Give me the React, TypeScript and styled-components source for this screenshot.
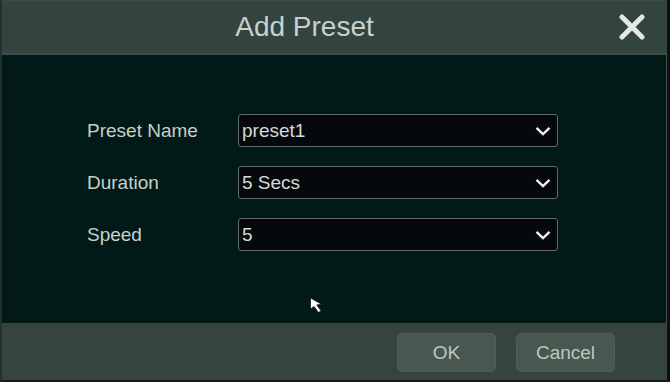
import React from 'react'
import styled, { createGlobalStyle } from 'styled-components'

const GlobalStyle = createGlobalStyle`
  html, body {
    margin: 0;
    padding: 0;
    background: #0b100f;
  }
  body {
    font-family: 'Liberation Sans', Arial, sans-serif;
  }
`

const Dialog = styled.div`
  width: 670px;
  height: 382px;
  box-sizing: border-box;
  display: flex;
  flex-direction: column;
  border-left: 2px solid #26312e;
  border-right: 3px solid #0c1110;
  border-bottom: 2px solid #151b1a;
  background: #021a17;
`

const Header = styled.div`
  height: 55px;
  box-sizing: border-box;
  display: flex;
  align-items: center;
  background: #33443f;
  border-top: 1px solid #3b4b46;
  border-bottom: 2px solid #3f504b;
`

const Title = styled.div`
  flex: 1;
  text-align: center;
  font-size: 28px;
  color: #c9d0cd;
  padding-left: 10px;
`

const CloseButton = styled.button`
  width: 70px;
  height: 100%;
  background: none;
  border: none;
  padding: 0;
  display: flex;
  align-items: center;
  justify-content: center;
  cursor: pointer;
`

const Body = styled.div`
  position: relative;
  flex: 1;
  display: flex;
  flex-direction: column;
  gap: 19px;
  padding: 59px 0 0 85px;
  border-right: 1px solid #4a5552;
`

const Row = styled.div`
  display: flex;
  align-items: center;
`

const Label = styled.div`
  width: 151px;
  font-size: 19px;
  color: #c8cfcb;
`

const Select = styled.div`
  width: 320px;
  height: 33px;
  box-sizing: border-box;
  display: flex;
  align-items: center;
  justify-content: space-between;
  padding: 0 6px 0 3px;
  background: #05090c;
  border: 1px solid #616a68;
  border-radius: 3px;
  font-size: 19px;
  color: #d6dad8;
`

const Cursor = styled.svg`
  position: absolute;
  left: 307px;
  top: 242px;
`

const Footer = styled.div`
  height: 57px;
  box-sizing: border-box;
  display: flex;
  justify-content: flex-end;
  align-items: flex-start;
  gap: 20px;
  padding: 10px 52px 0 0;
  background: #35443f;
`

const Button = styled.button`
  width: 99px;
  height: 39px;
  background: #48574f;
  border: 1px solid #4e5d57;
  border-radius: 5px;
  font-family: 'Liberation Sans', Arial, sans-serif;
  font-size: 19px;
  color: #bfc7c3;
  cursor: pointer;
`

const Chevron = () => (
  <svg width="16" height="10" viewBox="0 0 16 10">
    <path d="M1.5 1.8 L8 8 L14.5 1.8" fill="none" stroke="#eef0ef" strokeWidth="2.4" />
  </svg>
)

const fields = [
  { label: 'Preset Name', value: 'preset1' },
  { label: 'Duration', value: '5 Secs' },
  { label: 'Speed', value: '5' },
]

export default function App() {
  return (
    <>
      <GlobalStyle />
      <Dialog>
        <Header>
          <Title>Add Preset</Title>
          <CloseButton aria-label="Close">
            <svg width="26" height="26" viewBox="0 0 26 26">
              <path d="M3 3 L23 23 M23 3 L3 23" stroke="#e4e7e6" strokeWidth="5" strokeLinecap="round" />
            </svg>
          </CloseButton>
        </Header>
        <Body>
          {fields.map(f => (
            <Row key={f.label}>
              <Label>{f.label}</Label>
              <Select>
                <span>{f.value}</span>
                <Chevron />
              </Select>
            </Row>
          ))}
          <Cursor width="16" height="18" viewBox="0 0 16 18">
            <path d="M1.5 1 L1.5 12 L5 9.5 L9.5 15.5 L12 13.8 L7.8 8 L12.5 7.2 Z" fill="#ffffff" stroke="#1a1a1a" strokeWidth="0.8" />
          </Cursor>
        </Body>
        <Footer>
          <Button>OK</Button>
          <Button>Cancel</Button>
        </Footer>
      </Dialog>
    </>
  )
}
